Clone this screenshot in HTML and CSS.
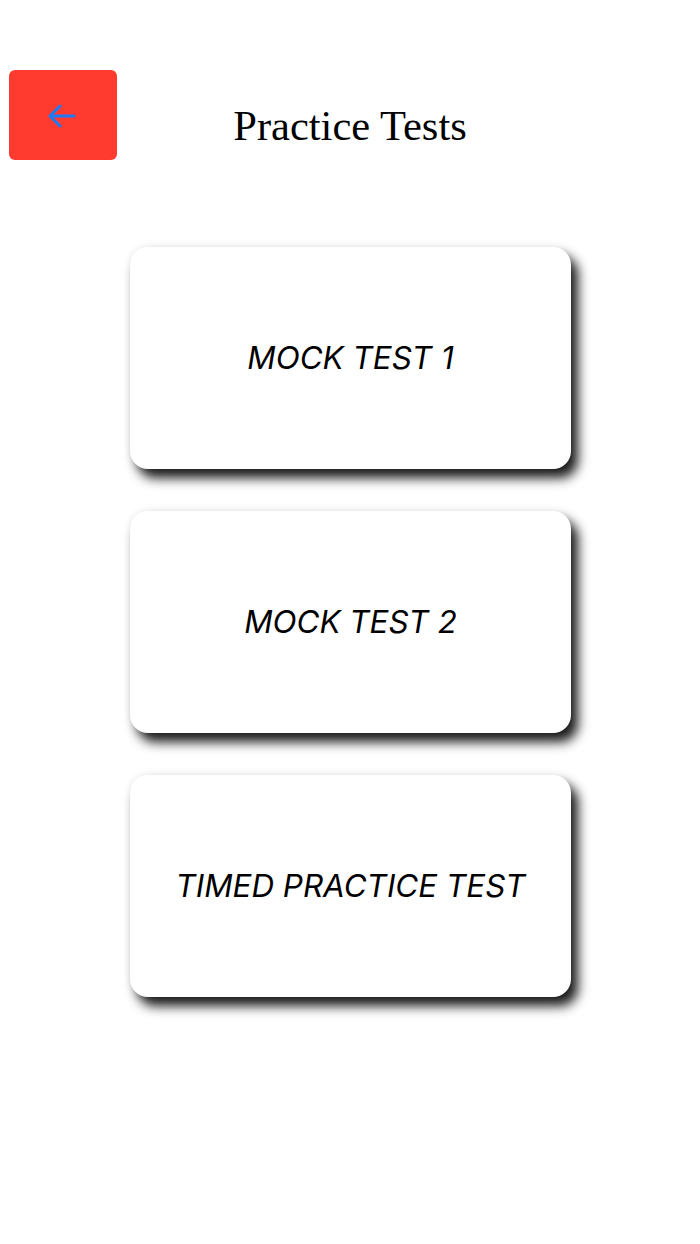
FILE: index.html
```html
<!DOCTYPE html>
<html>
<head>
<meta charset="utf-8">
<link rel="stylesheet" href="styles.css">
</head>
<body>
<div class="header">
  <button class="back">
    <svg width="30" height="24" viewBox="0 0 30 24"><path d="M27 12H4M13 2L3 12L13 22" fill="none" stroke="#1f7bf5" stroke-width="3" stroke-linecap="round" stroke-linejoin="round"/></svg>
  </button>
  <h1 class="title">Practice Tests</h1>
  <div></div>
</div>
<div class="cards">
  <div class="card">MOCK TEST 1</div>
  <div class="card">MOCK TEST 2</div>
  <div class="card">TIMED PRACTICE TEST</div>
</div>
</body>
</html>
```
FILE: styles.css
```css
html, body { margin: 0; padding: 0; background: #fff; }
body { min-height: 1244px; }
.header {
  display: grid;
  grid-template-columns: 1fr auto 1fr;
  align-items: start;
  padding-top: 70px;
}
.back {
  justify-self: start;
  margin-left: 9px;
  width: 108px;
  height: 90px;
  border: none;
  border-radius: 6px;
  background: #ff3b30;
  display: flex;
  align-items: center;
  justify-content: center;
  padding: 0;
}
.back svg { display: block; margin-top: 2px; margin-right: 2px; }
.title {
  margin: 32px 0 0 0;
  font-family: "Liberation Serif", "Times New Roman", serif;
  font-weight: normal;
  font-size: 42.5px;
  line-height: 48px;
  color: #000;
}
.cards {
  display: flex;
  flex-direction: column;
  align-items: center;
  gap: 42px;
  margin-top: 87px;
  padding-left: 1px;
  padding-bottom: 80px;
}
.card {
  width: 441px;
  height: 222px;
  background: #fff;
  border-radius: 18px;
  box-shadow: 7px 9px 12px rgba(0,0,0,0.9), 0 0 10px rgba(0,0,0,0.07);
  display: flex;
  align-items: center;
  justify-content: center;
  font-family: Inter, "Noto Sans", sans-serif;
  font-style: italic;
  font-size: 31.4px;
  color: #000;
}
```
